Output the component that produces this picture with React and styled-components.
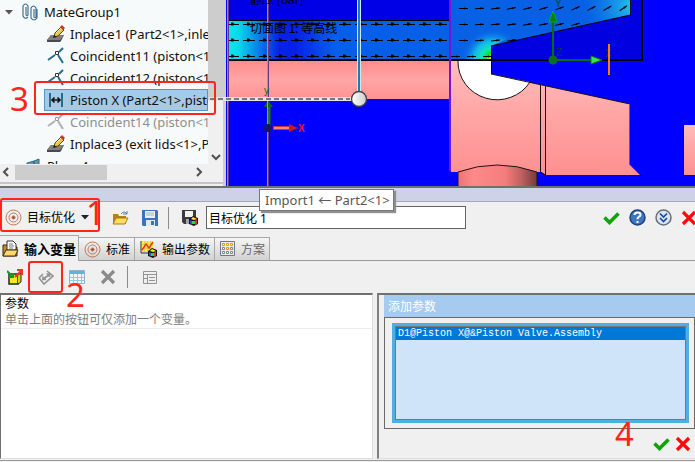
import React from 'react';
import styled, { createGlobalStyle, css } from 'styled-components';

const Global = createGlobalStyle`
  * { box-sizing: border-box; }
  html, body, #root { height: 100%; }
  body {
    margin: 0;
    overflow: hidden;
    background: #f0f0f0;
    color: #000;
    font-family: "Noto Sans", "Noto Sans CJK SC", sans-serif;
    font-size: 12px;
  }
  button, input, select { font: inherit; color: inherit; }
  svg { display: block; flex: none; }
`;

const Page = styled.main`
  display: flex;
  flex-direction: column;
  height: 100%;
`;

const Workspace = styled.section`
  position: relative;
  display: grid;
  grid-template-columns: 226px minmax(0, 1fr);
  flex: none;
`;

const TreePanel = styled.nav`
  display: grid;
  grid-template-columns: 208px 15px;
  grid-template-rows: 164px 16px 6px;
  background: #f0f0f0;
  border-right: 3px solid #cdcdcd;
`;

const Tree = styled.ul`
  margin: 0;
  padding: 1px 0 0;
  list-style: none;
  overflow: hidden;
  background: #f7fafa;
`;

const TreeRow = styled.li`
  display: flex;
  align-items: center;
  gap: 3px;
  height: 22px;
  margin-left: ${p => p.$indent}px;
  padding-left: 3px;
  white-space: nowrap;
  font-size: 13px;
  color: ${p => (p.$muted ? '#8f8f8f' : '#111')};
  ${p => p.$selected && css`
    background: #a6c9e6;
    border: 1px solid #5b93c4;
    padding-left: 2px;
  `}
`;

const VScroll = styled.div`
  display: flex;
  flex-direction: column;
  justify-content: space-between;
  align-items: center;
`;

const VThumb = styled.div`
  width: 100%;
  height: 100px;
  background: #cdcdcd;
`;

const HScroll = styled.div`
  display: flex;
  align-items: center;
  padding: 0 4px 0 1px;
`;

const HTrack = styled.div`
  flex: 1;
  height: 15px;
  margin-left: 4px;
`;

const HThumb = styled.div`
  width: 92px;
  height: 100%;
  background: #cdcdcd;
`;

const ScrollButton = styled.button`
  display: grid;
  place-items: center;
  width: 10px;
  height: 15px;
  padding: 0;
  border: 0;
  background: none;
`;

const Splitter = styled.div`
  grid-column: 1 / -1;
  align-self: center;
  height: 2px;
  background: #c4c4c4;
`;

const Viewport = styled.svg`
  width: 100%;
  height: 186px;
`;

const Leader = styled.svg`
  position: absolute;
  left: 208px;
  top: 0;
`;

const Mark = styled.span`
  position: absolute;
  z-index: 2;
  left: ${p => p.$x}px;
  top: ${p => p.$y}px;
  width: ${p => p.$w}px;
  height: ${p => p.$h}px;
  border: 2px solid #ff2418;
  border-radius: 3px;
  pointer-events: none;
`;

const MarkNumber = styled.span`
  position: absolute;
  z-index: 3;
  left: ${p => p.$x}px;
  top: ${p => p.$y}px;
  color: #ff2418;
  font-size: 33px;
  line-height: 32px;
  pointer-events: none;
`;

const Tooltip = styled.div`
  position: absolute;
  z-index: 4;
  left: 259px;
  top: 189px;
  height: 22px;
  padding: 0 3px 0 5px;
  border: 1px solid #767676;
  background: #fff;
  box-shadow: 2px 2px 1px #909090;
  color: #575757;
  font-size: 13px;
  line-height: 20px;
  white-space: nowrap;
`;

const TitleBand = styled.div`
  height: 16px;
  flex: none;
  background: #cdd2e6;
  border-top: 2px solid #707070;
  border-bottom: 1px solid #a3a8b8;
`;

const MainBar = styled.div`
  position: relative;
  display: flex;
  align-items: center;
  height: 31px;
  flex: none;
  padding-left: 5px;
`;

const GoalPicker = styled.label`
  display: flex;
  align-items: center;
  gap: 5px;
  width: 86px;
  margin-right: 21px;
`;

const GoalSelect = styled.select`
  appearance: none;
  width: 49px;
  padding: 0;
  border: 0;
  background: none;
`;

const IconButton = styled.button`
  display: grid;
  place-items: center;
  flex: none;
  width: 16px;
  height: 18px;
  padding: 0;
  border: 0;
  background: none;
`;

const IconGroup = styled.div`
  display: flex;
  align-items: center;
  gap: ${p => p.$gap}px;
`;

const Divider = styled.span`
  width: 1px;
  height: 22px;
  margin: ${p => p.$margin};
  background: #8c8c8c;
`;

const NameInput = styled.input`
  width: 260px;
  height: 23px;
  margin-left: 8px;
  padding: 0 2px;
  border: 1px solid #646464;
  background: #fff;
`;

const Actions = styled(IconGroup)`
  margin-left: auto;
  margin-right: -2px;
`;

const Tabs = styled.div`
  display: flex;
  align-items: flex-end;
  height: 28px;
  flex: none;
  border-bottom: 1px solid #999;
`;

const Tab = styled.button`
  display: flex;
  align-items: center;
  gap: 5px;
  height: 23px;
  padding: 0 4px 0 5px;
  border: 1px solid #a8a8a8;
  border-left: 0;
  border-bottom: 0;
  background: linear-gradient(#f5f5f5, #d2d2d2);
  color: ${p => (p.$muted ? '#666' : '#000')};
  white-space: nowrap;
  ${p => p.$active && css`
    height: 26px;
    margin-bottom: -1px;
    padding: 0 2px;
    background: #f0f0f0;
    font-size: 13px;
    font-weight: 700;
  `}
`;

const VariableBar = styled.div`
  position: relative;
  display: flex;
  align-items: center;
  height: 32px;
  flex: none;
  padding-left: 7px;
`;

const Panels = styled.div`
  position: relative;
  display: grid;
  grid-template-columns: minmax(0, 373fr) minmax(0, 318fr);
  gap: 4px;
  flex: 1;
  min-height: 0;
  margin-bottom: 1px;
  padding-bottom: 1px;
  border-bottom: 1px solid #999;
`;

const VariablesPanel = styled.section`
  background: #fff;
  border-top: 2px solid #707070;
  border-left: 1px solid #707070;
  border-right: 1px solid #ddd;
  border-bottom: 1px solid #ddd;
`;

const VariablesHead = styled.div`
  padding: 1px 4px 0;
  border-bottom: 1px solid #ececec;
  line-height: 16px;
`;

const Hint = styled.div`
  color: #808080;
`;

const ParametersPanel = styled.section`
  display: flex;
  flex-direction: column;
  border-top: 2px solid #707070;
  border-left: 2px solid #808080;
  border-bottom: 1px solid #ddd;
  padding-left: 5px;
`;

const PanelTitle = styled.h2`
  margin: 0;
  padding: 1px 4px 0;
  background: #a6caf0;
  color: #fff;
  font-size: 12px;
  font-weight: 400;
  line-height: 21px;
`;

const ListFrame = styled.div`
  display: flex;
  flex: 1;
  padding: 5px;
  padding-left: 7px;
  border: 1px solid #696969;
`;

const ParameterList = styled.ul`
  flex: 1;
  margin: 3px;
  padding: 0;
  list-style: none;
  background: #cfe4f8;
  border: 1px solid #777;
  outline: 3px solid #50aee3;
`;

const ParameterItem = styled.li`
  padding: 1px 2px 0;
  background: #0078d7;
  color: #fff;
  font-family: "Liberation Mono", monospace;
  font-size: 10px;
  line-height: 12px;
  white-space: pre;
`;

const PanelActions = styled.div`
  display: flex;
  justify-content: flex-end;
  align-items: center;
  gap: 6px;
  height: 29px;
  padding-right: 4px;
`;

/* Icons */
const Pencil = () => (
  <svg width="20" height="18" viewBox="0 0 20 18">
    <path d="M4 10h13l-3 6-1 1H0v-2z" fill="#4b4b4b" />
    <path d="M4 10h13l-4 5H0z" fill="#808080" />
    <path d="M7 12l1-4 6-6 3 3-6 6z" fill="#f1c940" stroke="#5b4514" />
    <path d="M13 2l2-2 3 3-2 2z" fill="#c7372c" />
    <path d="M9 8l5-5" stroke="#fff1a4" />
    <path d="M6 13l1-3 3 2z" fill="#222" />
  </svg>
);

const Coincident = ({ muted }) => (
  <svg width="20" height="18" viewBox="0 0 20 18" fill="none" stroke={muted ? '#b0b0b0' : '#276b8e'} strokeWidth="2">
    <path d="M1 13l7-5M12 5l4-4M11 8l5 8" />
    <path d="M8.500 4.500h3v3h-3z" stroke={muted ? '#999' : '#333'} strokeWidth="1" fill="#fff" />
  </svg>
);

const Distance = () => (
  <svg width="20" height="16" viewBox="0 0 20 16">
    <path d="M2 1h2v14H2zM14 1h2v14h-2z" fill="#276b8e" />
    <path d="M5 8h8M7.500 5.500L5 8l2.500 2.500M10.500 5.500L13 8l-2.500 2.500" fill="none" stroke="#111" strokeWidth="1.600" />
  </svg>
);

const Clips = () => (
  <svg width="25" height="18" viewBox="-6 0 25 18" fill="none" stroke="#3d7395" strokeWidth="1.2">
    <path d="M4 4v8q1 1.500 2 0V3q-2.500-4-5 0v10q2 4 5 1M12 6v8q1 1.500 2 0V5q-2.500-4-5 0v10q3 4 6 0V6" />
  </svg>
);

const Plane = () => (
  <svg width="18" height="16" viewBox="0 0 18 16"><path d="M1 5l7-2v11l-7 2zM8 3l5-2v11l-5 2z" fill="#5997b9" stroke="#276b8e" /></svg>
);

const Target = () => (
  <svg width="17" height="17" viewBox="0 0 17 17" fill="none" stroke="#bb7959">
    <circle cx="8.5" cy="8.5" r="7.5" /><circle cx="8.5" cy="8.5" r="4.5" /><circle cx="8.5" cy="8.5" r="1.6" fill="#a44f28" />
  </svg>
);

const Folder = () => (
  <svg width="17" height="16" viewBox="0 0 17 16">
    <path d="M1 14V4h5l1 2h7v8z" fill="#b48118" />
    <path d="M1 14L4 8h12l-3 6z" fill="#ffdc67" stroke="#ad7b14" />
    <path d="M9 4q3-4 6 0V1m0 3h-4" fill="none" stroke="#5b7c9e" />
  </svg>
);

const Save = () => (
  <svg width="16" height="16" viewBox="0 0 16 16">
    <path d="M0 0h15l1 1v15H1l-1-1z" fill="#3c73b7" /><path d="M3 1h10v7H3z" fill="#eaf1f6" />
    <path d="M4 3h8M4 5h8" stroke="#9fb5c4" /><path d="M4 10h9v6H4z" fill="#e4e7eb" /><path d="M9 11h3v4H9z" fill="#3c73b7" />
  </svg>
);

const ColorCube = ({ x, y }) => (
  <g transform={`translate(${x} ${y})`}>
    <path d="M0 3l4-3 5 2v6l-4 2-5-2z" fill="#111" /><path d="M1 4l2 1v4L1 7z" fill="#2c4ce8" />
    <path d="M6 5l2-2v5L6 9z" fill="#ec2f22" /><path d="M2 3l2-2 4 2-3 1z" fill="#f6ef36" /><path d="M3 5h3v3H3z" fill="#27d649" />
  </g>
);

const SaveAs = () => (
  <svg width="16" height="16" viewBox="0 0 16 16">
    <path d="M0 0h14v14H2l-2-2z" fill="#3b3b3b" /><path d="M3 1h8v6H3z" fill="#f2f2f2" /><path d="M4 9h6v5H4z" fill="#a7a7a7" /><ColorCube x={7} y={6} />
  </svg>
);

const Check = () => (
  <svg width="17" height="14" viewBox="0 0 17 14"><path d="M1.500 6.500l5 5 9-9" fill="none" stroke="#0aa50a" strokeWidth="3.600" /></svg>
);

const Cross = ({ color = '#ff0909' }) => (
  <svg width="16" height="16" viewBox="0 0 16 16"><path d="M2 2l12 12M14 2L2 14" stroke={color} strokeWidth="3.200" /></svg>
);

const Help = () => (
  <svg width="17" height="17" viewBox="0 0 17 17">
    <circle cx="8.5" cy="8.5" r="7.5" fill="#3d77bd" stroke="#1d427e" strokeWidth="1.5" />
    <path d="M5.500 6q0-2.500 3-2.500t3 2.200q0 1.300-1.800 2.300-1.200.7-1.200 2.200" fill="none" stroke="#fff" strokeWidth="2" /><path d="M7.500 12h2v2h-2z" fill="#fff" />
  </svg>
);

const Expand = () => (
  <svg width="17" height="17" viewBox="0 0 17 17">
    <circle cx="8.500" cy="8.500" r="7.500" fill="#dbe4ef" stroke="#66707b" strokeWidth="1.5" />
    <path d="M5 4.500l3.500 3.500L12 4.500M5 9l3.500 3.500L12 9" fill="none" stroke="#164ca0" strokeWidth="1.7" />
  </svg>
);

const InputFolder = () => (
  <svg width="17" height="18" viewBox="0 0 17 18">
    <path d="M1 16V5h4l1 2h9v9z" fill="#c58b20" stroke="#3d2b0c" />
    <path d="M5 10V1h6l3 3v6z" fill="#fff" stroke="#333" /><path d="M7 4h4M7 6h5M7 8h4" stroke="#777" />
    <path d="M1 16l3-6h12l-3 6z" fill="#ffd86a" stroke="#49320c" />
  </svg>
);

const Plot = () => (
  <svg width="17" height="17" viewBox="0 0 17 17">
    <path d="M1 0v12h13" fill="none" stroke="#333" /><path d="M2 0h11v11H2z" fill="#ffee38" />
    <path d="M4.500 0v11M7.500 0v11M10.500 0v11M2 3.500h11M2 7.500h11" stroke="#d1bd4b" strokeWidth=".6" />
    <path d="M2 9l4-6 3 4 4-6" fill="none" stroke="#ee3022" strokeWidth="1.4" /><ColorCube x={8} y={7} />
  </svg>
);

const GridIcon = () => (
  <svg width="16" height="16" viewBox="0 0 16 16">
    <path d="M.500.500h14v14H.500z" fill="#e4e9f2" stroke="#6c7891" />
    {[2, 6, 10].map((y, r) => [2, 6, 10].map((x, c) => (
      <path key={`${x}-${y}`} d={`M${x + 0.5} ${y + 0.5}h2v2h-2z`} fill="#fff" stroke={(r === 0 || (r === 1 && c === 1)) ? '#e29a1e' : '#858585'} />
    )))}
  </svg>
);

const ImportBox = () => (
  <svg width="16" height="16" viewBox="0 0 16 16">
    <path d="M2 5h9v10H2z" fill="#f1ec20" stroke="#242424" strokeWidth="1.5" /><path d="M11 6l3-2v9l-3 2" fill="#d9d01e" stroke="#242424" />
    <path d="M0 2l6 6M6 4v4H2" fill="none" stroke="#14972f" strokeWidth="2" /><path d="M8 8l6-6M10 1h5v5" fill="none" stroke="#f03425" strokeWidth="2" />
  </svg>
);

const Dimension = () => (
  <svg width="16" height="16" viewBox="0 0 16 16" fill="none" stroke="#929292" strokeWidth="1.600">
    <path d="M1 9l4-4M9 2l6 5-9 8-5-6" /><path d="M5 10l6-4M5 7.500v3h3M8.500 5h3v3" />
  </svg>
);

const TableIcon = () => (
  <svg width="16" height="14" viewBox="0 0 16 14">
    <path d="M.500.500h15v13H.500z" fill="#eef8ff" stroke="#91b3c8" /><path d="M1 1h14v3H1z" fill="#5bb4e5" />
    <path d="M1 7.500h14M1 10.500h14M4.500 4v9M8.500 4v9M12.500 4v9" stroke="#92c6e2" />
  </svg>
);

const FormIcon = () => (
  <svg width="14" height="13" viewBox="0 0 14 13" fill="none" stroke="#939393">
    <path d="M.500.500h13v12H.500zM1 3.500h12M4.500 4v8M6 6.500h6M6 9.500h6M1 7.500h3" />
  </svg>
);

const Chevron = ({ d }) => (
  <svg width="10" height="10" viewBox="0 0 10 10"><path d={d} fill="none" stroke="#505050" strokeWidth="2" /></svg>
);

const Down = ({ color = '#222' }) => (
  <svg width="8" height="5" viewBox="0 0 8 5"><path d="M0 0h8L4 4.500z" fill={color} /></svg>
);

const Vectors = ({ y, from, to, slope = 0, thin = false }) => {
  const items = [];
  for (let x = from; x < to; x += 16) {
    const angle = -slope * (x - from) / (to - from);
    items.push(
      <g key={x} transform={`translate(${x} ${y}) rotate(${angle})`}>
        <path d={thin ? 'M-4 0h9' : 'M-6 0h12'} stroke="#000" />
        <path d={thin ? 'M1-1l4 1-4 1z' : 'M-2-2h2l2 2-2 1h-2z'} fill="#000" />
      </g>
    );
  }
  return <g>{items}</g>;
};

const Drawing = () => (
  <Viewport viewBox="226 0 469 186" preserveAspectRatio="xMinYMin slice" role="img" aria-label="切面图">
    <defs>
      <linearGradient id="flow" x1="228" x2="450" gradientUnits="userSpaceOnUse">
        <stop offset="0" stopColor="#0ce8ec" /><stop offset=".05" stopColor="#09d6ec" /><stop offset=".16" stopColor="#0868e8" />
        <stop offset=".23" stopColor="#0822e5" /><stop offset=".3" stopColor="#0720e6" /><stop offset=".48" stopColor="#065fe8" /><stop offset="1" stopColor="#0860e5" />
      </linearGradient>
      <linearGradient id="pink" x2="0" y2="1"><stop stopColor="#ff8c8c" /><stop offset=".5" stopColor="#ffa6a6" /><stop offset="1" stopColor="#ff9292" /></linearGradient>
      <linearGradient id="body" x2="0" y2="1"><stop stopColor="#ffbcbc" /><stop offset=".5" stopColor="#ffa4a4" /><stop offset="1" stopColor="#ff9090" /></linearGradient>
      <linearGradient id="pipe"><stop stopColor="#e97474" /><stop offset=".2" stopColor="#ff8a8a" /><stop offset=".6" stopColor="#f47c7c" /><stop offset=".8" stopColor="#c26060" /><stop offset="1" stopColor="#713c3b" /></linearGradient>
      <radialGradient id="jet" cx="493" cy="60" r="32" gradientUnits="userSpaceOnUse"><stop stopColor="#ff9e00" /><stop offset=".12" stopColor="#ccef00" /><stop offset=".22" stopColor="#13db31" /><stop offset=".38" stopColor="#10e5bd" /><stop offset=".6" stopColor="#10b8e8" /><stop offset="1" stopColor="#0860e5" stopOpacity="0" /></radialGradient>
      <radialGradient id="tip" cx="632" cy="6" r="48" gradientUnits="userSpaceOnUse"><stop stopColor="#22c9ed" /><stop offset="1" stopColor="#1286e7" stopOpacity="0" /></radialGradient>
    </defs>
    <path d="M226 0H1200V400H226z" fill="#00f" />
    <path d="M228 0H450V20H228z" fill="#0000e6" />
    <path d="M228 20H450V60H228z" fill="url(#flow)" />
    <path d="M450 0H630V15L491 46V60H450z" fill="#0860e5" />
    <path d="M450 0H630V15L491 46V60H450z" fill="url(#tip)" />
    <path d="M451 20H550L491 46V60H451z" fill="url(#jet)" />
    <path d="M491 46L630 15V0H641V60H491z" fill="#0000e0" />
    <path d="M228 61H450V99H228z" fill="url(#pink)" />
    <path d="M451 61H491V74L630 104V165L640 175H546L541 172H451z" fill="url(#body)" />
    <path d="M458 61A39 38 0 0 0 530 82L491 74V61z" fill="#fff" />
    <path d="M458 61A39 38 0 0 0 530 82" fill="none" stroke="#161616" />
    <path d="M458 186V172Q497 158 537 172V186z" fill="url(#pipe)" />
    <path d="M458 172Q497 158 537 172M458 172V186M537 172V186" fill="none" stroke="#241414" />
    <path d="M540.500 85V172L545.500 175V86M491 74L630 104M600 175.500H642" fill="none" stroke="#1c1111" />
    <path d="M629.500 104V165" stroke="#805368" />
    <path d="M684 125H695V175H684z" fill="url(#body)" /><path d="M683.500 125V175.500H695" fill="none" stroke="#111" />
    <path d="M228 20.500H450M491.500 46V74M491 46L630.500 15V0" fill="none" stroke="#050505" />
    <path d="M228 60H642V0" fill="none" stroke="#000" strokeWidth="2" />
    <Vectors y={24.500} from={233} to={448} /><Vectors y={40.500} from={233} to={448} /><Vectors y={56.500} from={233} to={448} />
    <Vectors y={8.500} from={463} to={628} slope={35} thin /><Vectors y={24.500} from={463} to={585} slope={18} thin />
    <Vectors y={40.500} from={463} to={522} slope={10} thin /><Vectors y={56.500} from={455} to={490} thin />
    <path d="M450 0V171" stroke="#7613da" strokeWidth="2" />
    <path d="M228.500 0V186M268.500 0V186" stroke="#693978" /><path d="M227.500 0V186M267.500 0V186" stroke="#ff8500" />
    <g fontFamily="Noto Sans CJK SC, sans-serif" fontSize="12"><text x="250" y="4">静压 [bar]</text><text x="250" y="33">切面图 1: 等高线</text></g>
    <g fontFamily="Liberation Sans, sans-serif" fontSize="10"><text x="264" y="94" fill="#006d23">y</text><text x="298" y="132" fill="#ed1625" fontWeight="700">X</text><text x="555" y="7" fill="#004b26">Y</text><text x="556" y="56" fill="#00394e">Z</text><text x="605" y="57" fill="#14402f">X</text></g>
    <path d="M269 126V104" stroke="#23761d" strokeWidth="3" /><path d="M264 107L268 100L273 107z" fill="#126417" />
    <path d="M267.500 100V126" stroke="#ee9000" />
    <circle cx="268" cy="128" r="4" fill="#171761" /><path d="M273 128H291" stroke="#c5343d" strokeWidth="4" /><path d="M274 128H290" stroke="#ff817e" strokeWidth="2" /><path d="M289 124L298 128L289 132z" fill="#c51c24" />
    <path d="M553 60V20M553 60H593" stroke="#086c16" strokeWidth="2" /><path d="M549 22L553 11L557 22z" fill="#087e13" stroke="#0aad16" /><path d="M591 56L602 60L591 64z" fill="#3de34c" stroke="#087e13" /><circle cx="553" cy="60" r="4.500" fill="#07721b" />
    <path d="M609 44V75" stroke="#ff7e00" strokeWidth="2" />
  </Viewport>
);

const rows = [
  { text: 'Inplace1 (Part2<1>,inlet', icon: <Pencil /> },
  { text: 'Coincident11 (piston<1>', icon: <Coincident /> },
  { text: 'Coincident12 (piston<1>', icon: <Coincident /> },
  { text: 'Piston X (Part2<1>,pisto', icon: <Distance />, selected: true },
  { text: 'Coincident14 (piston<1>', icon: <Coincident muted />, muted: true },
  { text: 'Inplace3 (exit lids<1>,Pl', icon: <Pencil /> },
];

export default function App() {
  return (
    <Page>
      <Global />
      <Workspace>
        <TreePanel>
          <Tree>
            <TreeRow $indent={2}><Down color="#555" /><Clips />MateGroup1</TreeRow>
            {rows.map(r => <TreeRow key={r.text} $indent={44} $selected={r.selected} $muted={r.muted}>{r.icon}{r.text}</TreeRow>)}
            <TreeRow $indent={23}><Plane />Plane4</TreeRow>
          </Tree>
          <VScroll><VThumb /><ScrollButton aria-label="向下滚动"><Chevron d="M1 3l4 4 4-4" /></ScrollButton></VScroll>
          <HScroll>
            <ScrollButton aria-label="向左滚动"><Chevron d="M7 1L3 5l4 4" /></ScrollButton>
            <HTrack><HThumb /></HTrack>
            <ScrollButton aria-label="向右滚动"><Chevron d="M3 1l4 4-4 4" /></ScrollButton>
          </HScroll>
          <span />
          <Splitter />
        </TreePanel>
        <Drawing />
        <Leader width="162" height="112" viewBox="208 0 162 112">
          <defs><linearGradient id="ball"><stop stopColor="#fff" /><stop offset="1" stopColor="#ccc" /></linearGradient></defs>
          <path d="M209 99H353" stroke="#e2e2e2" strokeWidth="4" /><path d="M210 99H350" stroke="#797979" strokeWidth="2" strokeDasharray="5 3" />
          <path d="M359 0V92" stroke="#d5e6f2" strokeWidth="4" /><path d="M359 0V92" stroke="#1c7db5" strokeWidth="2" />
          <circle cx="359" cy="99" r="7.500" fill="url(#ball)" stroke="#444" strokeWidth="1.300" />
        </Leader>
        <Mark $x={34} $y={81} $w={182} $h={34} /><MarkNumber $x={10} $y={83}>3</MarkNumber>
        <Tooltip role="tooltip">Import1 ← Part2&lt;1&gt;</Tooltip>
      </Workspace>
      <TitleBand />
      <MainBar>
        <GoalPicker><Target /><GoalSelect aria-label="研究类型"><option>目标优化</option></GoalSelect><Down /></GoalPicker>
        <IconGroup $gap={14}>
          <IconButton aria-label="打开"><Folder /></IconButton>
          <IconButton aria-label="保存"><Save /></IconButton>
        </IconGroup>
        <Divider $margin="0 13px 0 10px" />
        <IconButton aria-label="另存为"><SaveAs /></IconButton>
        <NameInput aria-label="名称" defaultValue="目标优化 1" />
        <Actions $gap={10}>
          <IconButton aria-label="确定"><Check /></IconButton>
          <IconButton aria-label="帮助"><Help /></IconButton>
          <IconButton aria-label="展开"><Expand /></IconButton>
          <IconButton aria-label="关闭"><Cross /></IconButton>
        </Actions>
        <Mark $x={0} $y={-4} $w={100} $h={34} /><MarkNumber $x={86} $y={-5}>1</MarkNumber>
      </MainBar>
      <Tabs role="tablist">
        <Tab role="tab" aria-selected="true" $active><InputFolder />输入变量</Tab>
        <Tab role="tab"><Target />标准</Tab>
        <Tab role="tab"><Plot />输出参数</Tab>
        <Tab role="tab" $muted><GridIcon />方案</Tab>
      </Tabs>
      <VariableBar>
        <IconGroup $gap={15}>
          <IconButton aria-label="添加仿真参数"><ImportBox /></IconButton>
          <IconButton aria-label="添加尺寸参数"><Dimension /></IconButton>
          <IconButton aria-label="添加设计表参数"><TableIcon /></IconButton>
          <IconButton aria-label="删除"><Cross color="#8b8b8b" /></IconButton>
        </IconGroup>
        <Divider $margin="0 14px 0 11px" />
        <IconButton aria-label="编辑"><FormIcon /></IconButton>
        <Mark $x={28} $y={0} $w={35} $h={32} /><MarkNumber $x={66} $y={18}>2</MarkNumber>
      </VariableBar>
      <Panels>
        <VariablesPanel>
          <VariablesHead>参数<Hint>单击上面的按钮可仅添加一个变量。</Hint></VariablesHead>
        </VariablesPanel>
        <ParametersPanel>
          <PanelTitle>添加参数</PanelTitle>
          <ListFrame>
            <ParameterList role="listbox" aria-label="添加参数">
              <ParameterItem role="option" aria-selected="true">D1@Piston X@&amp;Piston Valve.Assembly</ParameterItem>
            </ParameterList>
          </ListFrame>
          <PanelActions>
            <IconButton aria-label="接受"><Check /></IconButton>
            <IconButton aria-label="取消"><Cross /></IconButton>
          </PanelActions>
        </ParametersPanel>
        <MarkNumber $x={615} $y={125}>4</MarkNumber>
      </Panels>
    </Page>
  );
}
